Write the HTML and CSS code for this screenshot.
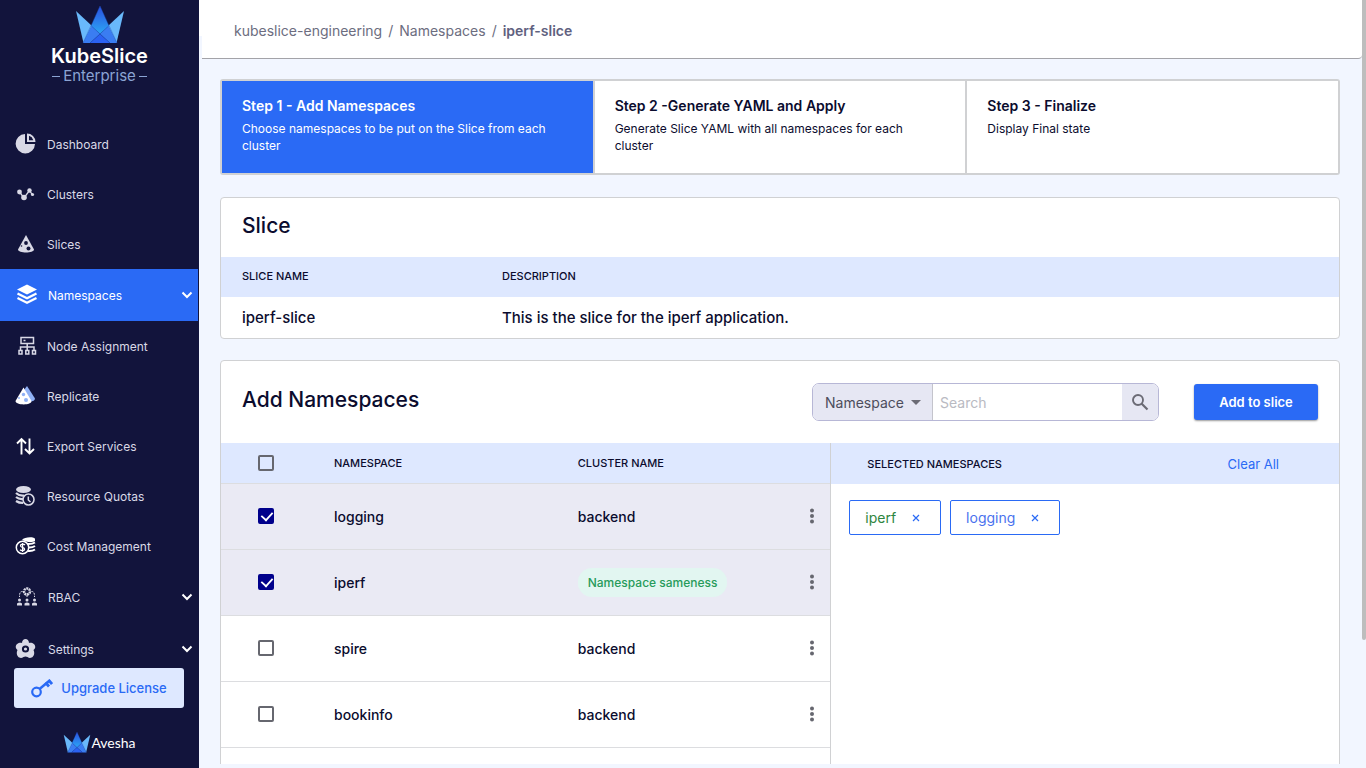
FILE: index.html
```html
<!DOCTYPE html>
<html lang="en">
<head>
    <meta charset="UTF-8">
    <meta name="viewport" content="width=device-width, initial-scale=1.0">
    <title>KubeSlice Enterprise - Namespaces</title>
    <link rel="stylesheet" href="styles.css">
</head>
<body>
    <!-- shared icons -->
    <svg class="sprite" aria-hidden="true">
        <defs>
            <linearGradient id="crownMid" x1="0" y1="0" x2="0" y2="1">
                <stop offset="0" stop-color="#2b4fe0"/>
                <stop offset="1" stop-color="#2ba6f5"/>
            </linearGradient>
        </defs>
        <symbol id="crown" viewBox="0 0 48 38">
            <path d="M0 5 L16 20 L7.500 37 Z" fill="#69b9fb"/>
            <path d="M48 5 L32 20 L40.500 37 Z" fill="#69b9fb"/>
            <path d="M24 0 L33 20 L24 28 L15 20 Z" fill="url(#crownMid)"/>
            <path d="M15.500 20 L24 28 L14 37 H7 Z" fill="#3a7df2"/>
            <path d="M32.500 20 L24 28 L34 37 H41 Z" fill="#3a7df2"/>
            <path d="M24 28 L34 37 H14 Z" fill="#2b62f3"/>
            <path d="M15.500 20 L34 37 M32.500 20 L14 37 M24 0 L7 37 M24 0 L41 37" stroke="#1b4bb8" stroke-width=".4" fill="none"/>
        </symbol>
        <symbol id="chevron" viewBox="0 0 12 8">
            <path d="M1.5 1.5 L6 6 L10.5 1.5" fill="none" stroke="#fff" stroke-width="2"/>
        </symbol>
        <symbol id="dots" viewBox="0 0 4 16">
            <circle cx="2" cy="2.5" r="2"/>
            <circle cx="2" cy="8" r="2"/>
            <circle cx="2" cy="13.5" r="2"/>
        </symbol>
        <symbol id="cross" viewBox="0 0 8 8">
            <path d="M1 1 L7 7 M7 1 L1 7" fill="none" stroke="#2a6af5" stroke-width="1.2"/>
        </symbol>
    </svg>

    <aside class="sidebar">
        <div class="brand">
            <svg class="brand-crown"><use href="#crown"/></svg>
            <div class="brand-name">KubeSlice</div>
            <div class="brand-sub">Enterprise</div>
        </div>

        <nav class="menu">
            <a href="#">
                <svg viewBox="0 0 22 22" fill="#d9d9e6"><path d="M10 1 A9.700 9.700 0 1 0 20 11 H10 Z"/><path fill-rule="evenodd" d="M12 .5 A8.500 8.500 0 0 1 20.500 9 H12 Z M14 2.800 V7.200 H18.300 A6.500 6.500 0 0 0 14 2.800 Z"/></svg>
                <span>Dashboard</span>
            </a>
            <a href="#">
                <svg viewBox="0 0 22 22" fill="#d9d9e6"><path d="M4.5 9 L9 15 L14.5 7.5 L17.5 12" fill="none" stroke="#d9d9e6" stroke-width="1.3"/><circle cx="4.5" cy="9" r="2.4"/><circle cx="9" cy="14.5" r="2.8"/><circle cx="14.5" cy="7.5" r="2.2"/><circle cx="17.5" cy="11.5" r="1.6"/></svg>
                <span>Clusters</span>
            </a>
            <a href="#">
                <svg viewBox="0 0 22 22"><path d="M11 2 L19 16.500 C19 20.500 3 20.500 3 16.500 Z" fill="#d9d9e6"/><circle cx="11" cy="10" r="1.900" fill="#12143c"/><circle cx="13.500" cy="15.500" r="2" fill="#12143c"/><circle cx="6.500" cy="13" r=".8" fill="#12143c"/></svg>
                <span>Slices</span>
            </a>
            <a href="#" class="expandable active">
                <svg viewBox="0 0 22 22"><path d="M12 .5 L22 5.500 L12 10.500 L2 5.500 Z" fill="#fff"/><path d="M2.500 9.500 L12 14.200 L21.500 9.500 M2.500 14 L12 18.700 L21.500 14" fill="none" stroke="#fff" stroke-width="2.300"/></svg>
                <span>Namespaces</span>
                <svg class="chevron"><use href="#chevron"/></svg>
            </a>
            <a href="#">
                <svg viewBox="0 0 22 22" fill="none" stroke="#d9d9e6" stroke-width="1.500"><path d="M6 2.500 H18.500 V8.500 H6 Z M12.200 8.500 V15 M5.500 15 V12 H19 V15 M8.500 5.500 H10.500"/><path d="M4 15.500 H7 V19 H4 Z M10.800 15.500 H13.800 V19 H10.800 Z M17.500 15.500 H20.500 V19 H17.500 Z"/></svg>
                <span>Node Assignment</span>
            </a>
            <a href="#">
                <svg viewBox="0 0 22 22"><path d="M12 1 L20 13.500 C20 15.500 18 16.500 15 16.500 L9 5 Z" fill="#90b1f5"/><path d="M8.500 2.500 L16.500 16 C17 20.500 .5 20.500 .5 16 Z" fill="#fff"/><circle cx="8.500" cy="9.500" r="1.700" fill="#90b1f5"/><circle cx="11" cy="15" r="2" fill="#90b1f5"/><circle cx="4" cy="13" r="1" fill="#90b1f5"/></svg>
                <span>Replicate</span>
            </a>
            <a href="#">
                <svg viewBox="0 0 22 22" fill="none" stroke="#fff" stroke-width="1.900"><path d="M6.500 19.500 V4 M2 8.500 L6.500 4 L11 8.500 M14.500 3.500 V18.500 M10 14 L14.500 18.500 L19 14"/></svg>
                <span>Export Services</span>
            </a>
            <a href="#">
                <svg viewBox="0 0 22 22"><ellipse cx="8.500" cy="4.500" rx="7.500" ry="3.500" fill="#d9d9e6"/><path d="M1 8 Q4 11 9 10.500 M1 12 Q4 14.500 8 14 M1 16 Q4 18 8 18" fill="none" stroke="#d9d9e6" stroke-width="2.200"/><circle cx="13.500" cy="14.500" r="5.500" fill="#12143c" stroke="#d9d9e6" stroke-width="1.600"/><path d="M13.300 11.500 V15 L15.500 17" fill="none" stroke="#d9d9e6" stroke-width="1.500"/></svg>
                <span>Resource Quotas</span>
            </a>
            <a href="#">
                <svg viewBox="0 0 22 22"><path d="M7 5 C9 1.500 20 1.500 20 4 V6 C17 8 11 7 7 5 Z" fill="#fff"/><path d="M11 9 Q17 9.500 20 7.500 M13 12.500 Q17 13 20 11 M13 16 Q17 16.500 20 14.500" fill="none" stroke="#fff" stroke-width="2"/><circle cx="7.500" cy="12.500" r="6.200" fill="#12143c" stroke="#fff" stroke-width="1.500"/><path d="M10 10 C8.500 8.500 5.300 9 5.500 11 C5.800 12.800 9.600 12 9.600 14.200 C9.500 16 6.300 16 5 14.700 M7.600 8 V17" fill="none" stroke="#fff" stroke-width="1.300"/></svg>
                <span>Cost Management</span>
            </a>
            <a href="#" class="expandable">
                <svg viewBox="0 0 22 22" fill="#d9d9e6"><circle cx="12" cy="5.500" r="3" fill="none" stroke="#d9d9e6" stroke-width="2.500" stroke-dasharray="2 .6"/><path d="M7.500 5.500 C4.500 5.500 4.500 8 4.500 11 M16.500 5.500 C19.500 5.500 19.500 8 19.500 11 M12 9 V12" fill="none" stroke="#d9d9e6" stroke-dasharray="2 1"/><circle cx="4.500" cy="14" r="1.500"/><circle cx="12" cy="14" r="1.500"/><circle cx="19.500" cy="14" r="1.500"/><path d="M2 19.500 V17.500 Q4.500 15.500 7 17.500 V19.500 Z M9.500 19.500 V17.500 Q12 15.500 14.500 17.500 V19.500 Z M17 19.500 V17.500 Q19.500 15.500 22 17.500 V19.500 Z"/></svg>
                <span>RBAC</span>
                <svg class="chevron"><use href="#chevron"/></svg>
            </a>
            <a href="#" class="expandable">
                <svg viewBox="0 0 22 22"><path d="M7 5 C7 -.3 14 -.3 14 5 C19 4 22.500 9 18.500 12 C21 17 16.500 22 12.500 19 Q10.500 18 8.500 19 C4.500 22 0 17 2.500 12 C-1.500 9 2 4 7 5 Z" fill="#d9d9e6"/><circle cx="10.500" cy="11" r="2.600" fill="#d9d9e6" stroke="#12143c" stroke-width="2"/></svg>
                <span>Settings</span>
                <svg class="chevron"><use href="#chevron"/></svg>
            </a>
        </nav>

        <button class="upgrade" type="button">
            <svg viewBox="0 0 22 20" fill="none" stroke="#2a6af5"><circle cx="5.500" cy="14" r="4.300" stroke-width="2.200"/><path d="M8.500 11 L19 2.200" stroke-width="2.500"/><path d="M14.500 4.500 L18 8.500 M17.500 2 L21 6" stroke-width="2.800"/></svg>
            <span>Upgrade License</span>
        </button>

        <div class="company">
            <svg><use href="#crown"/></svg>
            <span>Avesha</span>
        </div>
    </aside>

    <main class="main">
        <header class="topbar">
            <a href="#">kubeslice-engineering</a>
            <span>/</span>
            <a href="#">Namespaces</a>
            <span>/</span>
            <strong>iperf-slice</strong>
        </header>

        <div class="content">
            <ol class="steps">
                <li class="current">
                    <h3>Step 1 - Add Namespaces</h3>
                    <p>Choose namespaces to be put on the Slice from each cluster</p>
                </li>
                <li>
                    <h3>Step 2 -Generate YAML and Apply</h3>
                    <p>Generate Slice YAML with all namespaces for each cluster</p>
                </li>
                <li>
                    <h3>Step 3 - Finalize</h3>
                    <p>Display Final state</p>
                </li>
            </ol>

            <section class="card">
                <h2>Slice</h2>
                <table class="slice-table">
                    <thead>
                        <tr>
                            <th>SLICE NAME</th>
                            <th>DESCRIPTION</th>
                        </tr>
                    </thead>
                    <tbody>
                        <tr>
                            <td>iperf-slice</td>
                            <td>This is the slice for the iperf application.</td>
                        </tr>
                    </tbody>
                </table>
            </section>

            <section class="card namespaces">
                <div class="card-head">
                    <h2>Add Namespaces</h2>
                    <form class="search">
                        <div class="filter">
                            <select aria-label="Search by">
                                <option>Namespace</option>
                                <option>Cluster</option>
                            </select>
                            <svg viewBox="0 0 10 5"><path d="M0 0 H10 L5 5 Z" fill="#6b6b75"/></svg>
                        </div>
                        <input type="text" placeholder="Search" aria-label="Search">
                        <button type="button" aria-label="Search">
                            <svg viewBox="0 0 18 18" fill="none" stroke="#6b6b75"><circle cx="7" cy="7" r="5" stroke-width="1.900"/><path d="M10.500 10.500 L16.500 16.500" stroke-width="2.200"/></svg>
                        </button>
                    </form>
                    <button class="primary" type="button">Add to slice</button>
                </div>

                <div class="split">
                    <table class="ns-table">
                        <thead>
                            <tr>
                                <th class="col-check"><input type="checkbox" aria-label="Select all"></th>
                                <th class="col-name">NAMESPACE</th>
                                <th>CLUSTER NAME</th>
                                <th class="col-menu"></th>
                            </tr>
                        </thead>
                        <tbody>
                            <tr class="selected">
                                <td><input type="checkbox" aria-label="logging" checked></td>
                                <td>logging</td>
                                <td>backend</td>
                                <td><button type="button" aria-label="More"><svg><use href="#dots"/></svg></button></td>
                            </tr>
                            <tr class="selected">
                                <td><input type="checkbox" aria-label="iperf" checked></td>
                                <td>iperf</td>
                                <td><span class="badge">Namespace sameness</span></td>
                                <td><button type="button" aria-label="More"><svg><use href="#dots"/></svg></button></td>
                            </tr>
                            <tr>
                                <td><input type="checkbox" aria-label="spire"></td>
                                <td>spire</td>
                                <td>backend</td>
                                <td><button type="button" aria-label="More"><svg><use href="#dots"/></svg></button></td>
                            </tr>
                            <tr>
                                <td><input type="checkbox" aria-label="bookinfo"></td>
                                <td>bookinfo</td>
                                <td>backend</td>
                                <td><button type="button" aria-label="More"><svg><use href="#dots"/></svg></button></td>
                            </tr>
                        </tbody>
                    </table>

                    <div class="picked">
                        <div class="picked-head">
                            <span>SELECTED NAMESPACES</span>
                            <button type="button">Clear All</button>
                        </div>
                        <div class="chips">
                            <span class="chip same">iperf <button type="button" aria-label="Remove iperf"><svg><use href="#cross"/></svg></button></span>
                            <span class="chip">logging <button type="button" aria-label="Remove logging"><svg><use href="#cross"/></svg></button></span>
                        </div>
                    </div>
                </div>
            </section>
        </div>
    </main>

    <div class="scrollbar"><div class="thumb"></div></div>
</body>
</html>
```
FILE: styles.css
```css
* {
    box-sizing: border-box;
}
body {
    margin: 0;
    height: 100vh;
    display: flex;
    overflow: hidden;
    background: #f2f6ff;
    color: #0b0c2e;
    font-family: Inter, "Liberation Sans", sans-serif;
    font-size: 14px;
}
h2, h3, p, ol {
    margin: 0;
    padding: 0;
}
a {
    color: inherit;
    text-decoration: none;
}
button, input, select {
    font: inherit;
    color: inherit;
    border: none;
    padding: 0;
    background: none;
}
button {
    cursor: pointer;
}
svg {
    display: block;
    flex: none;
}
.sprite {
    position: absolute;
    width: 0;
    height: 0;
}

/* sidebar */
.sidebar {
    width: 199px;
    flex: none;
    display: flex;
    flex-direction: column;
    background: #12143c;
    color: #d9d9e6;
}
.brand {
    height: 119px;
    padding-top: 6px;
    display: flex;
    flex-direction: column;
    align-items: center;
}
.brand-crown {
    width: 48px;
    height: 38px;
}
.brand-name {
    font-size: 20px;
    line-height: 24px;
    font-weight: 600;
    color: #fff;
}
.brand-sub {
    display: flex;
    align-items: center;
    gap: 3px;
    font-size: 15px;
    line-height: 16px;
    color: #8ba4d4;
}
.brand-sub::before, .brand-sub::after {
    content: "";
    width: 8px;
    height: 1px;
    background: #8ba4d4;
}
.menu a {
    height: 50px;
    padding: 0 6px 0 15px;
    display: flex;
    align-items: center;
    gap: 10px;
    font-size: 12px;
}
.menu a svg {
    width: 22px;
    height: 22px;
}
.menu .expandable {
    height: 52px;
    gap: 11px;
}
.menu .active {
    margin-right: 1px;
    padding-right: 5px;
    background: #2a6af5;
    color: #fff;
}
.menu a .chevron {
    width: 12px;
    height: 8px;
    margin-left: auto;
}
.upgrade {
    height: 40px;
    margin: -7px 15px 0 14px;
    display: flex;
    flex: none;
    align-items: center;
    justify-content: center;
    gap: 8px;
    border-radius: 3px;
    background: #dee8ff;
    color: #2a6af5;
    font-size: 13px;
    font-weight: 500;
}
.upgrade svg {
    width: 22px;
    height: 20px;
}
.company {
    margin-top: 24px;
    display: flex;
    justify-content: center;
    align-items: center;
    color: #fff;
    font-family: Lato, sans-serif;
    font-size: 14px;
}
.company svg {
    width: 28px;
    height: 21px;
}

/* page */
.main {
    flex: 1;
    min-width: 0;
    padding: 0 0 4px 3px;
    display: flex;
    flex-direction: column;
    background: linear-gradient(#fff, #fff) 0 0 / 3px 36px no-repeat;
}
.topbar {
    height: 59px;
    padding: 3px 32px 0;
    display: flex;
    flex: none;
    align-items: center;
    gap: 6px;
    border-bottom: 1px solid #a3a3a8;
    border-radius: 0 0 4px 0;
    background: #fff;
    color: #6c6d80;
    font-size: 14px;
}
.topbar strong {
    font-weight: 600;
    color: #5f6180;
}
.content {
    flex: 1;
    min-height: 0;
    overflow: hidden;
    padding: 20px 22px 0 18px;
    display: flex;
    flex-direction: column;
    gap: 21px;
}
.steps {
    flex: none;
    margin-bottom: 1px;
    display: grid;
    grid-template-columns: repeat(3, 1fr);
    gap: 2px;
    padding: 2px;
    border-radius: 3px;
    background: #d0d1d3;
    list-style: none;
}
.steps li {
    min-height: 92px;
    padding: 16px 36px 16px 20px;
    background: #fff;
}
.steps .current {
    background: #2a6af5;
    color: #fff;
}
.steps h3 {
    font-size: 14px;
    line-height: 18px;
    font-weight: 600;
}
.steps p {
    margin-top: 5px;
    font-size: 12px;
    line-height: 17px;
}
.card {
    flex: none;
    border: 1px solid #d0d1d3;
    border-radius: 4px;
    background: #fff;
    overflow: hidden;
}
.card h2 {
    font-size: 21px;
    line-height: 27px;
    font-weight: 500;
}
.card > h2 {
    padding: 14px 21px 18px;
}
table {
    width: 100%;
    border-collapse: collapse;
    table-layout: fixed;
    text-align: left;
}
th {
    padding: 0;
    background: #dee8ff;
    font-size: 11px;
    font-weight: 500;
}
td {
    padding: 0;
    font-weight: 500;
}
.slice-table th {
    height: 40px;
    padding: 0 21px 2px;
}
.slice-table td {
    height: 41px;
    padding: 0 21px;
    font-size: 15px;
}
.slice-table th:first-child {
    width: 260px;
}

/* namespaces card */
.card-head {
    height: 82px;
    padding: 0 21px;
    display: flex;
    align-items: center;
}
.card-head h2 {
    padding-bottom: 5px;
}
.search {
    height: 38px;
    margin-left: auto;
    margin-right: 35px;
    display: flex;
    border: 1px solid #b7b7d6;
    border-radius: 7px;
    overflow: hidden;
}
.filter {
    position: relative;
    width: 120px;
    border-right: 1px solid #c4c4cc;
    background: #e6e7f3;
}
.filter select {
    width: 100%;
    height: 100%;
    padding-left: 12px;
    appearance: none;
    color: #4d4e5c;
}
.filter svg {
    position: absolute;
    top: 16px;
    right: 11px;
    width: 10px;
    height: 5px;
    pointer-events: none;
}
.search input {
    width: 189px;
    padding: 0 7px;
    outline: none;
}
.search input::placeholder {
    color: #b9bac2;
}
.search button {
    width: 36px;
    display: grid;
    place-items: center;
    background: #e6e7f3;
}
.search button svg {
    width: 18px;
    height: 18px;
}
.primary {
    width: 124px;
    height: 36px;
    border-radius: 3px;
    background: #2a6af5;
    box-shadow: 0 1px 2px rgba(0, 0, 0, 0.4);
    color: #fff;
    font-size: 13px;
    font-weight: 600;
}
.split {
    display: grid;
    grid-template-columns: 54.5% 1fr;
    min-height: 560px;
}
.ns-table {
    align-self: start;
}
.ns-table th {
    height: 40px;
    border-bottom: 1px solid #dcdde0;
}
.ns-table td {
    height: 66px;
    border-bottom: 1px solid #dcdde0;
}
.ns-table .selected {
    background: #eaeaf4;
}
.col-check {
    width: 113px;
}
.col-name {
    width: 40%;
}
.col-menu {
    width: 36px;
}
.ns-table input {
    display: block;
    width: 16px;
    height: 16px;
    margin: 0 0 0 37px;
    appearance: none;
    border: 2px solid #66676f;
    border-radius: 2px;
}
.ns-table input:checked {
    border-color: #00008b;
    background: #00008b;
}
.ns-table input:checked::after {
    content: "";
    display: block;
    width: 6px;
    height: 10px;
    margin: 0 0 0 3px;
    border: solid #fff;
    border-width: 0 2px 2px 0;
    transform: translateY(-1px) rotate(42deg) scale(0.9);
}
.ns-table button {
    width: 36px;
    display: grid;
    place-items: center;
}
.ns-table button svg {
    width: 4px;
    height: 16px;
    fill: #66676f;
}
.badge {
    display: inline-block;
    padding: 0 10px;
    border-radius: 14px;
    background: #e2f6f1;
    color: #279b5b;
    font-size: 12px;
    line-height: 29px;
}
.picked {
    border-left: 1px solid #d0d1d3;
}
.picked-head {
    height: 41px;
    padding: 0 60px 0 36px;
    display: flex;
    align-items: center;
    justify-content: space-between;
    background: #dee8ff;
    font-size: 11px;
    font-weight: 500;
}
.picked-head button {
    color: #2a6af5;
    font-size: 13px;
    font-weight: 400;
}
.chips {
    padding: 16px 18px;
    display: flex;
    gap: 9px;
}
.chip {
    height: 35px;
    padding: 0 20px 0 15px;
    display: flex;
    align-items: center;
    gap: 16px;
    border: 1px solid #2a6af5;
    border-radius: 2px;
    color: #4a72ee;
}
.chip.same {
    color: #2e8540;
}
.chip svg {
    width: 8px;
    height: 8px;
}

.scrollbar {
    width: 4px;
    flex: none;
}
.thumb {
    height: 83.3%;
    border-radius: 0 0 2px 2px;
    background: #bdbdbd;
}
```
